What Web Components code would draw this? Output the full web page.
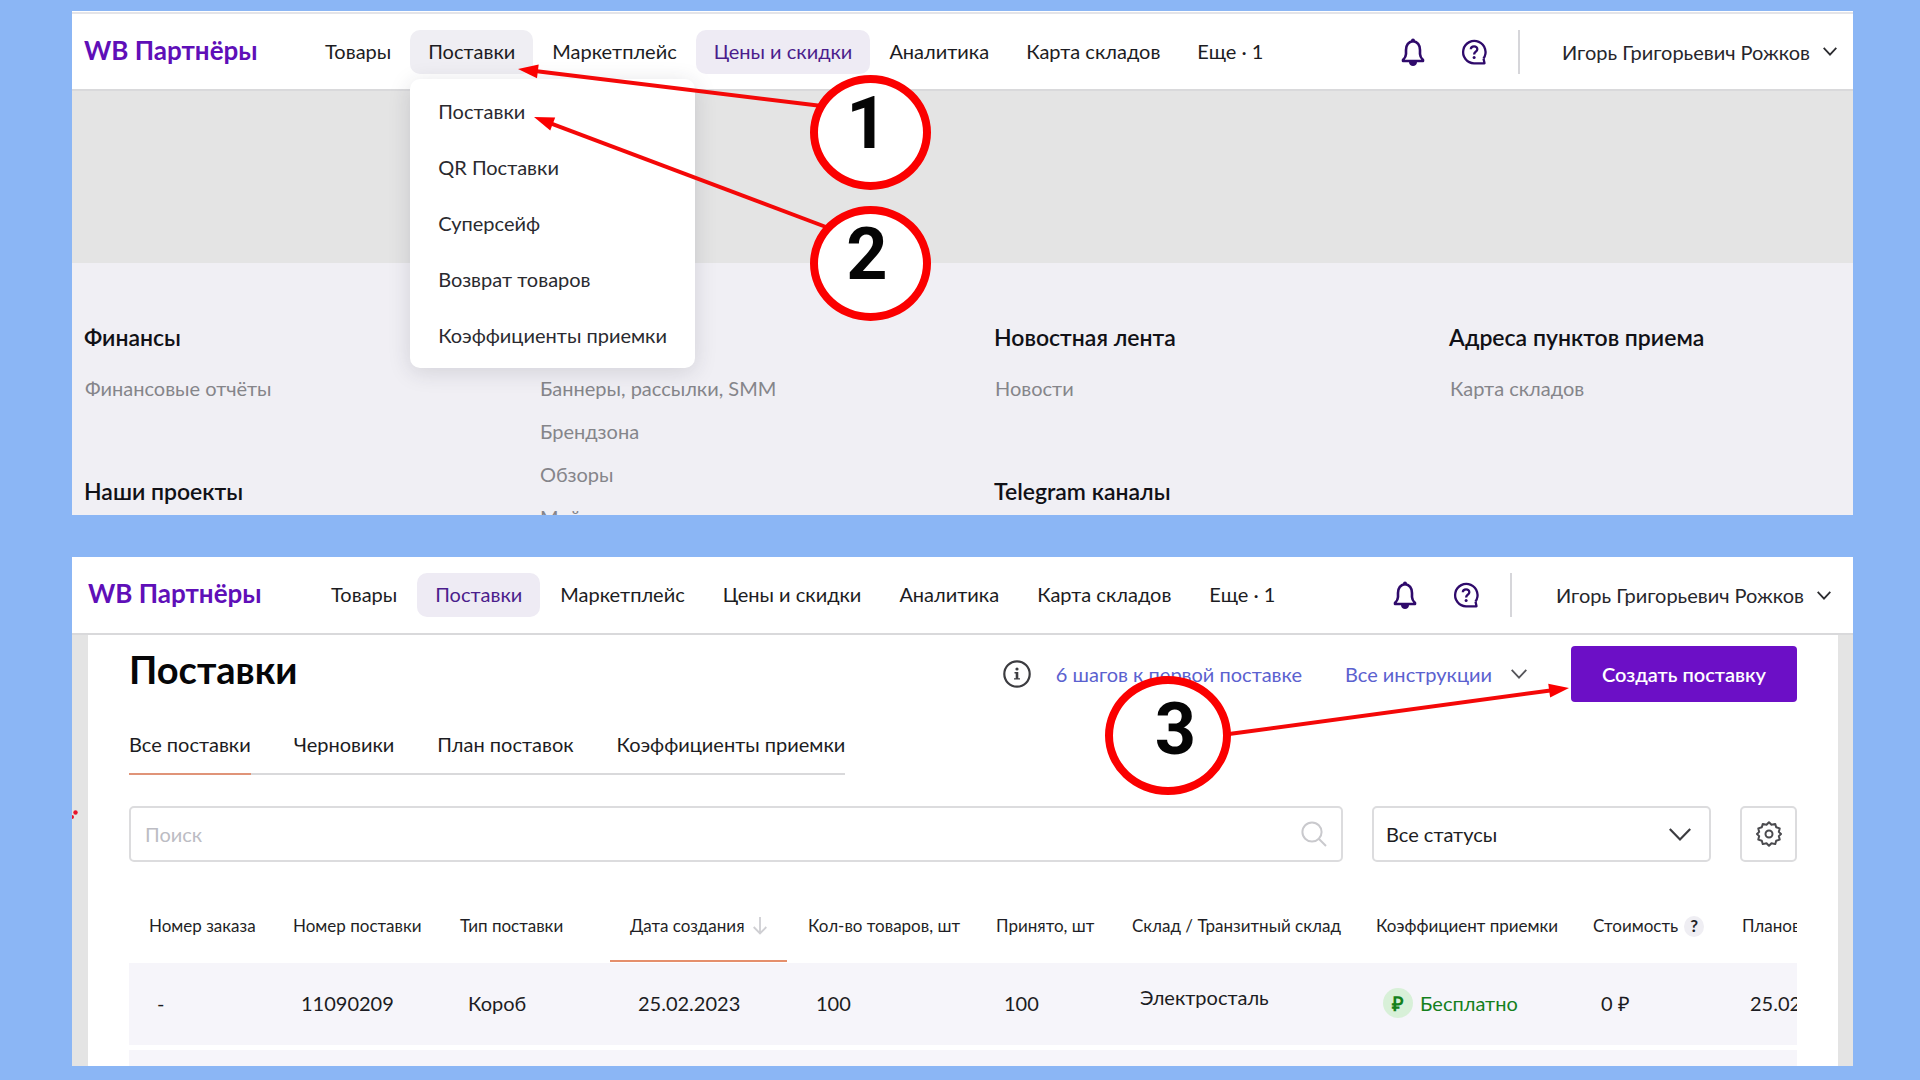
<!DOCTYPE html>
<html lang="ru">
<head>
<meta charset="utf-8">
<title>WB Партнёры — Поставки</title>
<style>
  html, body { margin: 0; height: 100%; }
  body { background: #8bb6f5; font-family: Lato, "Open Sans", sans-serif; font-size: 20px; line-height: 24px; color: #1c1c22; }
</style>
</head>
<body>
<guide-board>
  <shot-panel style="--grow: 504">
    <app-header style="--bar: 75px; --logo-width: 223px; --pad-left: 12px; --pad-right: 16px; --strip: 2px; --strip-gap: 1px; --user-gap: 42px; --nav-gap: 1px">
      <nav-item>Товары</nav-item>
      <nav-item state="open">Поставки
        <drop-menu slot="menu">
          <a href="#supplies">Поставки</a>
          <a href="#qr">QR Поставки</a>
          <a href="#safe">Суперсейф</a>
          <a href="#returns">Возврат товаров</a>
          <a href="#rates">Коэффициенты приемки</a>
        </drop-menu>
      </nav-item>
      <nav-item>Маркетплейс</nav-item>
      <nav-item state="current">Цены и скидки</nav-item>
      <nav-item>Аналитика</nav-item>
      <nav-item>Карта складов</nav-item>
      <nav-item>Еще · 1</nav-item>
    </app-header>
    <site-footer></site-footer>
    <step-mark style="left: 738px; top: 64px; --w: 121px; --h: 115px; --shift: -7px; --drop: 1px">1</step-mark>
    <step-mark style="left: 738px; top: 195px; --w: 121px; --h: 115px; --shift: -7px; --drop: 1px">2</step-mark>
    <step-arrow x1="750" y1="95" x2="446" y2="58"></step-arrow>
    <step-arrow x1="754" y1="216" x2="462" y2="106"></step-arrow>
  </shot-panel>

  <shot-panel style="--grow: 509">
    <app-header style="--bar: 76px; --logo-width: 225px; --pad-left: 16px; --pad-right: 22px; --strip: 0px; --strip-gap: 0px; --user-gap: 44px; --nav-gap: 2px">
      <nav-item>Товары</nav-item>
      <nav-item state="current">Поставки</nav-item>
      <nav-item>Маркетплейс</nav-item>
      <nav-item>Цены и скидки</nav-item>
      <nav-item>Аналитика</nav-item>
      <nav-item>Карта складов</nav-item>
      <nav-item>Еще · 1</nav-item>
    </app-header>
    <supplies-page></supplies-page>
    <step-mark style="left: 1033px; top: 119px; --w: 126px; --h: 119px; --shift: 15px; --drop: 6px">3</step-mark>
    <step-arrow x1="1157" y1="177" x2="1497" y2="131"></step-arrow>
  </shot-panel>
</guide-board>

<script>
const define = (name, html, setup) => {
  const template = document.createElement('template');
  template.innerHTML = html;
  customElements.define(name, class extends HTMLElement {
    constructor() {
      super();
      this.attachShadow({ mode: 'open' }).append(template.content.cloneNode(true));
    }
    connectedCallback() { if (setup) setup(this, this.shadowRoot); }
  });
};

const icons = {
  bell: [26, 28, '<g fill="none" stroke="#2f0a6b" stroke-width="2.600" stroke-linejoin="round"><path d="M13 3C8 4 6 8 6 12v4c0 3-1 4-3 6v1h20v-1c-2-2-3-3-3-6v-4c0-4-2-8-7-9z"/></g><circle cx="13" cy="2.4" r="2" fill="#2f0a6b"/><path d="M9 24h8c0 2.500-2 4-4 4s-4-1.500-4-4z" fill="#2f0a6b"/>'],
  help: [26, 26, '<g fill="none" stroke="#2f0a6b"><path d="M22.500 19.500A11.200 11.200 0 1 0 13 24.300h10.500l-1-4.800" stroke-width="2.300" stroke-linejoin="round"/><path d="M9.800 10.300c.2-4 6.600-3.800 6.500 0 0 2.300-3.200 2.500-3.200 5.200" stroke-width="2.300"/></g><circle cx="13.100" cy="18.600" r="1.500" fill="#2f0a6b"/>'],
  chevron: [14, 9, '<path d="M.7.900 7 7.600 13.300.900" fill="none" stroke="#2c2c30" stroke-width="1.800"/>'],
  'chevron-light': [16, 10, '<path d="M.7.900 8 8.600 15.300.900" fill="none" stroke="#55555a" stroke-width="1.800"/>'],
  'chevron-big': [22, 13, '<path d="M.8 1 11 11.500 21.200 1" fill="none" stroke="#3c3c40" stroke-width="2.200"/>'],
  info: [28, 28, '<circle cx="14" cy="14" r="12.700" fill="none" stroke="#3c3c40" stroke-width="2.200"/><circle cx="14" cy="9" r="1.600" fill="#3c3c40"/><path d="M11.500 12h3.800v6.200h1.700v1.400h-6v-1.400h1.700v-4.800h-1.200z" fill="#3c3c40"/>'],
  search: [26, 26, '<g fill="none" stroke="#c9c9cd" stroke-width="2"><circle cx="11" cy="11" r="9.600"/><path d="m18 18 7 7"/></g>'],
  sort: [14, 18, '<path d="M7 0v16M.7 10 7 16.500 13.300 10" fill="none" stroke="#cfcfd3" stroke-width="1.800"/>'],
  gear: [26, 26, '<g fill="none" stroke="#4a4a4e" stroke-width="2"><path d="M13 1.200l2.500 2.600 3.700-.9 1 3.400 3.500 1.100-.9 3.500L25 13l-2.200 2.100.9 3.500-3.500 1.100-1 3.400-3.700-.9L13 24.800l-2.500-2.600-3.700.9-1-3.400-3.500-1.100.9-3.500L1 13l2.200-2.100-.9-3.500 3.500-1.100 1-3.400 3.700.9z" stroke-linejoin="round"/><circle cx="13" cy="13" r="3.500"/></g>']
};
define('ui-icon', '<style>:host{display:inline-flex;flex:none}svg{display:block;overflow:visible}</style>', (el, root) => {
  const [w, h, body] = icons[el.getAttribute('name')];
  root.innerHTML += `<svg width="${w}" height="${h}" viewBox="0 0 ${w} ${h}" aria-hidden="true">${body}</svg>`;
});

define('guide-board', `<style>
  :host { display: flex; flex-direction: column; gap: 42px; box-sizing: border-box; min-height: 100vh; padding: 11px 67px 14px 72px; }
</style><slot></slot>`);

define('shot-panel', `<style>
  :host { display: flex; flex-direction: column; position: relative; overflow: hidden; background: #fff; flex: var(--grow) 1 0; min-height: 0; }
</style><slot></slot>`);

define('app-header', `<style>
  :host { display: flex; flex: none; position: relative; z-index: 1; flex-direction: column; background: #fff; border-bottom: 2px solid #d9d9db; padding-top: var(--strip-gap); }
  .strip { height: var(--strip); background: #e4e4e8; }
  .bar { display: flex; align-items: center; height: var(--bar); padding: 0 var(--pad-right) 0 var(--pad-left); }
  .logo { flex: none; width: var(--logo-width); padding-bottom: 4px; font-size: 26px; line-height: 32px; font-weight: 700; color: #5f0fb8; text-decoration: none; white-space: nowrap; }
  nav { display: flex; gap: var(--nav-gap); }
  .side { display: flex; align-items: center; margin-left: auto; }
  button { font: inherit; color: inherit; background: none; border: 0; padding: 0; display: flex; align-items: center; white-space: nowrap; }
  .tools { display: flex; align-items: center; gap: 35px; padding-right: 31px; border-right: 2px solid #d6d6da; height: 44px; }
  .user { gap: 13px; margin-left: var(--user-gap); color: #26262b; }
</style>
<div class="strip"></div>
<div class="bar">
  <a class="logo" href="#home">WB Партнёры</a>
  <nav><slot></slot></nav>
  <div class="side">
    <div class="tools">
      <button aria-label="Уведомления"><ui-icon name="bell"></ui-icon></button>
      <button aria-label="Помощь"><ui-icon name="help"></ui-icon></button>
    </div>
    <button class="user">Игорь Григорьевич Рожков <ui-icon name="chevron"></ui-icon></button>
  </div>
</div>`);

define('nav-item', `<style>
  :host { display: block; position: relative; }
  a { display: flex; align-items: center; box-sizing: border-box; height: 44px; padding: 0 18px 2px; border-radius: 10px; color: inherit; text-decoration: none; white-space: nowrap; }
  :host([state=open]) a { background: #efeef3; }
  :host([state=current]) a { background: #eeebf4; color: #4b1d8c; }
</style><a href="#section"><slot></slot></a><slot name="menu"></slot>`);

define('drop-menu', `<style>
  :host { position: absolute; top: 49px; left: 0; box-sizing: border-box; width: 285px; padding: 4px 0 5px; background: #fff; border-radius: 10px; box-shadow: 0 4px 22px rgba(40,40,60,.15); display: flex; flex-direction: column; }
  ::slotted(a) { padding: 16px 28px; color: #2a2a2f; text-decoration: none; white-space: nowrap; }
</style><slot></slot>`);

define('site-footer', `<style>
  :host { display: flex; flex-direction: column; flex: 1; }
  .gap { flex: none; height: 172px; background: #e4e4e4; }
  .grid { flex: 1; display: grid; grid-template-columns: repeat(4, 455px); padding: 62px 0 0 12px; background: #f0eff4; align-content: start; }
  section { display: flex; flex-direction: column; height: 154px; }
  h2 { flex: none; margin: 0 0 27px; height: 24px; font-size: 23px; line-height: 24px; font-weight: 600; color: #111116; }
  a { flex: none; margin: 0 0 19px 1px; color: #85858a; text-decoration: none; }
</style>
<div class="gap"></div>
<div class="grid">
  <section><h2>Финансы</h2><a href="#r">Финансовые отчёты</a></section>
  <section><h2></h2><a href="#b">Баннеры, рассылки, SMM</a><a href="#z">Брендзона</a><a href="#o">Обзоры</a><a href="#m">Мой</a></section>
  <section><h2>Новостная лента</h2><a href="#n">Новости</a></section>
  <section><h2>Адреса пунктов приема</h2><a href="#k">Карта складов</a></section>
  <section><h2>Наши проекты</h2></section>
  <section></section>
  <section><h2>Telegram каналы</h2></section>
</div>`);

define('supplies-page', `<style>
  :host { display: flex; flex-direction: column; flex: 1; padding: 11px 41px 0; margin-right: 15px; border-left: 16px solid #e4e4e4; box-shadow: 15px 0 0 #e4e4e4; box-sizing: border-box; position: relative; }
  .top { display: flex; align-items: center; height: 56px; }
  h1 { margin: 0 auto 10px 0; font-size: 38px; line-height: 40px; font-weight: 700; color: #060608; }
  a { color: #5b61cf; text-decoration: none; white-space: nowrap; }
  .steps { margin-left: 25px; }
  .all { margin: 0 44px 0 43px; display: flex; align-items: center; gap: 19px; }
  .create { width: 226px; height: 56px; border: 0; border-radius: 4px; background: #6c0fc6; color: #fff; font: 600 20px/24px Lato, sans-serif; }
  .tabs { display: flex; gap: 43px; align-self: flex-start; margin-top: 30px; border-bottom: 2px solid #d9d9db; color: #1c1c22; }
  .tabs a { color: inherit; padding-bottom: 17px; margin-bottom: -2px; border-bottom: 2px solid transparent; }
  .tabs a[aria-current] { border-color: #e09478; }
  .filters { display: flex; gap: 29px; margin-top: 31px; }
  .field { display: flex; align-items: center; position: relative; box-sizing: border-box; height: 56px; border: 2px solid #dcdcde; border-radius: 5px; background: #fff; }
  .search { flex: 1; padding: 0 14px; }
  input { flex: 1; min-width: 0; border: 0; outline: 0; background: none; padding: 0; font: inherit; color: inherit; }
  input::placeholder { color: #bcbcc3; opacity: 1; }
  .status { width: 339px; }
  select { appearance: none; width: 100%; height: 100%; border: 0; background: none; padding: 0 12px; font: inherit; color: inherit; }
  .status ui-icon { position: absolute; right: 18px; pointer-events: none; }
  .gear { width: 57px; padding: 0; justify-content: center; }
  supplies-table { margin-top: 26px; }
  .speck { position: absolute; left: -16px; top: 174px; }
</style>
<div class="top">
  <h1>Поставки</h1>
  <ui-icon name="info"></ui-icon>
  <a class="steps" href="#steps">6 шагов к первой поставке</a>
  <a class="all" href="#all">Все инструкции <ui-icon name="chevron-light"></ui-icon></a>
  <button class="create">Создать поставку</button>
</div>
<nav class="tabs">
  <a href="#all" aria-current="page">Все поставки</a><a href="#draft">Черновики</a><a href="#plan">План поставок</a><a href="#rate">Коэффициенты приемки</a>
</nav>
<div class="filters">
  <label class="field search"><input type="text" placeholder="Поиск" aria-label="Поиск"><ui-icon name="search"></ui-icon></label>
  <label class="field status"><select aria-label="Статус"><option>Все статусы</option></select><ui-icon name="chevron-big"></ui-icon></label>
  <button class="field gear" aria-label="Настройки"><ui-icon name="gear"></ui-icon></button>
</div>
<supplies-table></supplies-table>
<svg class="speck" width="8" height="10" aria-hidden="true"><circle cx="3.500" cy="3.500" r="2.200" fill="#e8132b"/><circle cx="0" cy="8" r="2" fill="#e8132b"/></svg>`);

define('supplies-table', `<style>
  :host { display: block; overflow: hidden; }
  table { table-layout: fixed; width: 1743px; border-collapse: collapse; }
  th { height: 75px; padding: 0 0 0 20px; font-size: 17px; line-height: 20px; font-weight: 400; text-align: left; white-space: nowrap; color: #1f1f26; }
  th div { display: flex; align-items: center; gap: 8px; height: 74px; border-bottom: 2px solid transparent; margin: 0 1px 1px -20px; padding: 4px 0 0 20px; box-sizing: border-box; }
  th.sorted div { border-color: #e58f6c; }
  td { height: 80px; padding: 0 0 2px 28px; background: #f6f5fa; line-height: 24px; white-space: nowrap; }
  tr.next td { height: 40px; border-top: 5px solid #fff; }
  td.place { padding-bottom: 14px; height: 68px; }
  .hint { display: grid; place-items: center; width: 20px; height: 21px; border-radius: 50%; background: #efeef3; font-weight: 700; margin-left: -2px; }
  .free { display: flex; align-items: center; gap: 7px; color: #14801c; margin-left: -1px; }
  .rub { display: grid; place-items: center; width: 30px; height: 30px; border-radius: 50%; background: #d8f0d8; font-weight: 600; }
</style>
<table>
  <colgroup><col style="width:144px"><col style="width:167px"><col style="width:170px"><col style="width:178px"><col style="width:188px"><col style="width:136px"><col style="width:244px"><col style="width:217px"><col style="width:149px"><col style="width:150px"></colgroup>
  <thead><tr>
    <th><div>Номер заказа</div></th><th><div>Номер поставки</div></th><th><div>Тип поставки</div></th>
    <th class="sorted"><div>Дата создания <ui-icon name="sort"></ui-icon></div></th>
    <th><div>Кол-во товаров, шт</div></th><th><div>Принято, шт</div></th><th><div>Склад / Транзитный склад</div></th>
    <th><div>Коэффициент приемки</div></th><th><div>Стоимость <span class="hint">?</span></div></th><th><div>Планов</div></th>
  </tr></thead>
  <tbody>
    <tr><td>-</td><td>11090209</td><td>Короб</td><td>25.02.2023</td><td>100</td><td>100</td><td class="place">Электросталь</td>
      <td><span class="free"><span class="rub">₽</span>Бесплатно</span></td><td>0 ₽</td><td>25.02</td></tr>
    <tr class="next"><td></td><td></td><td></td><td></td><td></td><td></td><td></td><td></td><td></td><td></td></tr>
  </tbody>
</table>`);

define('step-mark', `<style>
  :host { position: absolute; z-index: 3; box-sizing: border-box; width: var(--w); height: var(--h); border: 8px solid #fb0000; border-radius: 50%; background: #fff; display: flex; justify-content: center; }
  span { font: 700 72px/80px Roboto, "Liberation Sans", sans-serif; color: #050505; margin-left: var(--shift); margin-top: var(--drop); }
</style><span><slot></slot></span>`);

define('step-arrow', `<style>
  :host { position: absolute; z-index: 2; inset: 0; pointer-events: none; }
  svg { display: block; width: 100%; height: 100%; }
</style>`, (el, root) => {
  const [x1, y1, x2, y2] = ['x1', 'y1', 'x2', 'y2'].map(k => Number(el.getAttribute(k)));
  const angle = Math.atan2(y2 - y1, x2 - x1) * 180 / Math.PI;
  const length = Math.hypot(x2 - x1, y2 - y1);
  root.innerHTML += `<svg aria-hidden="true"><g transform="translate(${x1} ${y1}) rotate(${angle})">
    <path d="M0 0H${length - 15}" stroke="#f40808" stroke-width="4"/>
    <path d="M${length} 0l-20-7v14z" fill="#fb0000"/></g></svg>`;
});
</script>
</body>
</html>
